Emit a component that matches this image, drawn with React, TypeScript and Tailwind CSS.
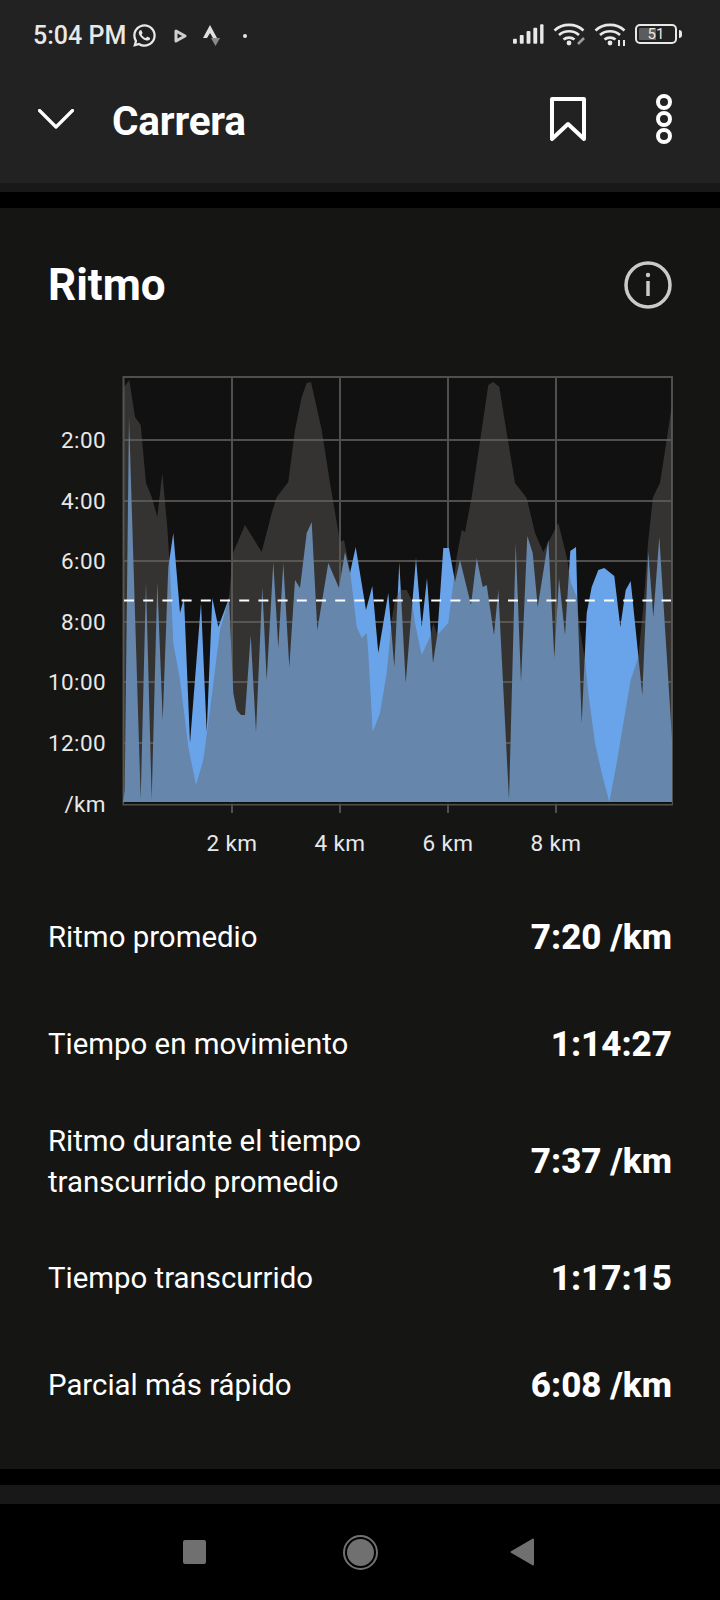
import { RiWhatsappLine } from "react-icons/ri";

// traced from the reference, in page coordinates
const PACE =
  "123,802 124.7,790 129,417 140.7,799 146,582 151.7,799 157.3,582 162.7,720 168.3,567 173.3,533 180,613 184,598 190,743 201,603 206.7,732 212.3,598 218.3,627 229,598 233.3,693 236.7,710 241,715 245,715 250.7,635 256,732 262.3,587 266.7,680 273.3,562 278.3,648 283.3,563 289.3,667 295,580 300,588 306.7,533 311.7,522 317.3,630 328.3,563 339,588 345,552 350,573 355.7,547 366,610 372.3,586 378.3,653 388.3,593 394.3,667 399.3,562 405.7,683 416,558 421.7,627 427,578 433,663 437.3,635 443.3,548 449,548 455,582 460,560 471,605 476.7,558 482.7,587 486.7,585 494,635 498.3,590 509,800 515.7,543 521,682 527.3,536 532.7,553 537.7,607 548.3,540 554.3,658 559,578 565,635 570.3,551 576,547 577.3,597 581.7,723 586.7,613 591.7,587 598.3,570 604.3,568 614.3,576 620.3,627 625.7,590 630.7,581 642.3,695 648.3,552 653.3,617 659.3,537 670,707 672,740 672,802";

const ELEVATION =
  "123,395 124,387 129.3,380 135,417 140.7,425 146,483 151.7,497 157.3,517 162.3,473 167.3,527 170,570 173.3,643 180,680 188.3,747 196,785 203.3,760 210,710 220,630 229,598 233,553 245,525 261.7,552 271.7,513 276.7,497 288.3,482 295,430 301.7,397 306.7,383 311,382 321.7,430 330,483 340,542 344,540 350,570 356.7,627 361.7,638 366.7,633 368.3,653 372.7,732 380,713 386.7,673 391.7,620 395,600 400,590 406.7,590 411.7,600 415,623 421.7,655 430,637 433.3,623 437.3,635 448.3,623 453.3,583 456.7,557 461.7,530 465,532 471.7,497 481.7,430 488.3,385 493.3,382 499.3,387 506.7,433 515,483 526.7,498 535,533 543.3,552 558.3,523 566.7,557 571,583 576.7,597 580,630 585,660 588.3,693 595,743 601.7,773 609.3,802 616.7,763 621.7,733 630.7,680 638.3,657 643.3,607 648,543 653,497 660,483 666.7,440 670.7,413 672,405 672,802 123,802";

const yTicks = [
  { label: "2:00", y: 440 },
  { label: "4:00", y: 501 },
  { label: "6:00", y: 561 },
  { label: "8:00", y: 622 },
  { label: "10:00", y: 682 },
  { label: "12:00", y: 743 },
];

const xTicks = [
  { label: "2 km", x: 232 },
  { label: "4 km", x: 340 },
  { label: "6 km", x: 448 },
  { label: "8 km", x: 556 },
];

const stats = [
  { label: ["Ritmo promedio"], value: "7:20 /km" },
  { label: ["Tiempo en movimiento"], value: "1:14:27" },
  { label: ["Ritmo durante el tiempo", "transcurrido promedio"], value: "7:37 /km" },
  { label: ["Tiempo transcurrido"], value: "1:17:15" },
  { label: ["Parcial más rápido"], value: "6:08 /km" },
];

const Wifi = ({ children }: { children?: React.ReactNode }) => (
  <svg width="32" height="24" viewBox="0 0 32 24" fill="none" stroke="#e8e8e8" strokeWidth="2.6">
    <path d="M1.5 8.5C9.5 1 22.5 1 30.5 8.5" />
    <path d="M6 13C11.5 8 20.5 8 26 13" />
    <path d="M10.5 17.5C13.5 15 18.5 15 21.5 17.5" />
    <circle cx="16" cy="21" r="2.4" fill="#e8e8e8" stroke="none" />
    {children}
  </svg>
);

const StatusBar = () => (
  <div className="flex h-[70px] items-center justify-between pl-[33px] pr-[38px] pt-[1px] text-[#e8e8e8]">
    <div className="flex items-center">
      <span className="text-[25px] font-medium leading-none">5:04 PM</span>
      <RiWhatsappLine size={27} className="ml-[5px]" />
      <svg width="13" height="14" viewBox="0 0 13 14" className="ml-[16px]" fill="none" stroke="#cfcfcf" strokeWidth="3">
        <path d="M2 2L11 7L2 12Z" strokeLinejoin="round" />
      </svg>
      <svg width="18" height="22" viewBox="0 0 18 22" className="ml-[16px]">
        <path d="M7 0L14 13H10L7 8L4 13H0Z" fill="#e0e0e0" />
        <path d="M8 13H17L12.5 21Z" fill="#8a8a8a" />
      </svg>
      <span className="ml-[22px] h-[4px] w-[4px] rounded-full bg-[#e8e8e8]" />
    </div>
    <div className="mb-[3px] flex items-center gap-[9px]">
      <svg width="31" height="20" viewBox="0 0 32 20" fill="#e8e8e8">
        <rect x="0" y="15" width="4" height="5" rx="1" />
        <rect x="7" y="11" width="4" height="9" rx="1" />
        <rect x="14" y="7" width="4" height="13" rx="1" />
        <rect x="21" y="3.5" width="4" height="16.5" rx="1" />
        <rect x="28" y="0" width="3.5" height="20" rx="1" />
      </svg>
      <Wifi>
        <path d="M25 22L31 16" strokeWidth="2.6" stroke="#9a9a9a" />
      </Wifi>
      <Wifi>
        <path d="M25 18V24M30 18V24" strokeWidth="2" />
      </Wifi>
      <div className="flex items-center">
        <div className="flex h-[20px] w-[42px] items-center justify-center rounded-[5px] border-2 border-[#e8e8e8] bg-[linear-gradient(90deg,#5c5c5c_0%,#5c5c5c_50%,transparent_50%)] bg-clip-content p-[2px] text-[15px] leading-none">
          51
        </div>
        <span className="ml-[2px] h-[8px] w-[3px] rounded-r-sm bg-[#e8e8e8]" />
      </div>
    </div>
  </div>
);

const Toolbar = () => (
  <div className="flex h-[98px] items-center pl-[38px] pr-[48px] text-white">
    <svg width="36" height="20" viewBox="0 0 36 20" fill="none" stroke="white" strokeWidth="3.2" strokeLinecap="round" strokeLinejoin="round">
      <path d="M1.5 1.5L18 18L34.5 1.5" />
    </svg>
    <h1 className="ml-[38px] flex-1 pt-[5px] text-[40.5px] font-bold leading-none tracking-[-0.2px]">Carrera</h1>
    <svg width="36" height="44" viewBox="0 0 36 44" fill="none" stroke="white" strokeWidth="4" strokeLinejoin="round">
      <path d="M2 2H34V42L18 27L2 42Z" />
    </svg>
    <svg width="16" height="50" viewBox="0 0 16 50" fill="none" stroke="white" strokeWidth="4" className="ml-[70px]">
      <circle cx="8" cy="8" r="6" />
      <circle cx="8" cy="25" r="6" />
      <circle cx="8" cy="42" r="6" />
    </svg>
  </div>
);

const PaceChart = () => (
  <svg viewBox="0 360 720 510" width="720" height="510" className="block">
    <rect x="123" y="377" width="549" height="426" fill="#111111" />
    <g stroke="#504f4d" strokeWidth="2" fill="none">
      {yTicks.map((t) => (
        <line key={t.y} x1="123" x2="672" y1={t.y} y2={t.y} />
      ))}
      {xTicks.map((t) => (
        <line key={t.x} x1={t.x} x2={t.x} y1="377" y2="813" />
      ))}
      <rect x="123.5" y="377" width="548.5" height="427.5" />
    </g>
    <polygon points={PACE} fill="#69a4ea" />
    <polygon points={ELEVATION} fill="rgb(98,96,92)" fillOpacity="0.44" />
    <line x1="124" x2="671" y1="600.5" y2="600.5" stroke="white" strokeWidth="2" strokeDasharray="10 9.2" />
    <line x1="124" x2="672" y1="803" y2="803" stroke="#0c0c0c" strokeWidth="1.5" />
    <g fill="#e8e8e8" fontSize="22.5" letterSpacing="0.4">
      {yTicks.map((t) => (
        <text key={t.label} x="106" y={t.y + 8} textAnchor="end">
          {t.label}
        </text>
      ))}
      <text x="106" y="812" textAnchor="end">
        /km
      </text>
      {xTicks.map((t) => (
        <text key={t.label} x={t.x} y="851" textAnchor="middle">
          {t.label}
        </text>
      ))}
    </g>
  </svg>
);

export default function App() {
  return (
    <div className="flex h-[1600px] w-[720px] flex-col overflow-hidden bg-black font-[Roboto,sans-serif]">
      <header className="h-[183px] bg-[#222222]">
        <StatusBar />
        <Toolbar />
      </header>
      <div className="h-[9px] bg-[#181818]" />

      <section className="mt-[16px] h-[1261px] bg-[#151514]">
        <div className="flex items-center justify-between pl-[48px] pr-[48px] pt-[53px]">
          <h2 className="h-[48px] text-[44px] font-bold leading-[49px] text-white">Ritmo</h2>
          <svg width="48" height="48" viewBox="0 0 48 48" fill="none" stroke="#cacaca" strokeWidth="3.5">
            <circle cx="24" cy="24" r="22" />
            <line x1="24" x2="24" y1="20" y2="35" strokeWidth="3.5" />
            <circle cx="24" cy="14" r="2.2" fill="#cacaca" stroke="none" />
          </svg>
        </div>
        <div className="mt-[51px]">
          <PaceChart />
        </div>
        <div className="mt-[14px] flex flex-col px-[48px]">
          {stats.map((s) => (
            <div
              key={s.value + s.label[0]}
              className={
                s.label.length > 1
                  ? "flex h-[127px] items-center justify-between text-white"
                  : "flex h-[107px] items-center justify-between text-white"
              }
            >
              <div className="text-[29.4px] leading-[41px]">
                {s.label.map((l) => (
                  <div key={l}>{l}</div>
                ))}
              </div>
              <div className="text-[35px] font-extrabold leading-none">{s.value}</div>
            </div>
          ))}
        </div>
      </section>

      <div className="mt-[16px] h-[19px] bg-[#181818]" />

      <nav className="flex flex-1 items-center">
        <div className="ml-[183px] h-[24px] w-[23px] rounded-[2px] bg-[#707070]" />
        <div className="ml-[137px] flex h-[35px] w-[35px] items-center justify-center rounded-full border-2 border-[#707070]">
          <div className="h-[27px] w-[27px] rounded-full bg-[#707070]" />
        </div>
        <svg width="24" height="28" viewBox="0 0 24 28" className="ml-[132px]" fill="#707070" stroke="#707070" strokeWidth="2" strokeLinejoin="round">
          <path d="M23 1.5V26.5L1.5 14Z" />
        </svg>
      </nav>
    </div>
  );
}
